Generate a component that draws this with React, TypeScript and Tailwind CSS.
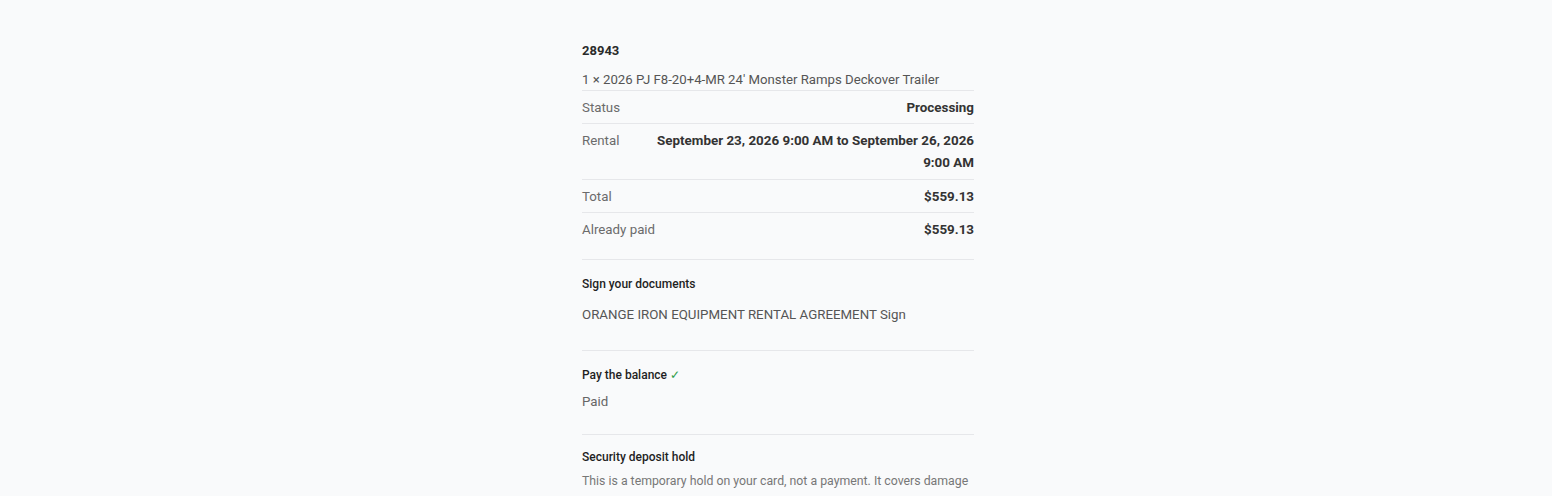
import React from "react";

const rows: { label: string; value: React.ReactNode; tall?: boolean }[] = [
  { label: "Status", value: "Processing" },
  {
    label: "Rental",
    tall: true,
    value: (
      <>
        September 23, 2026 9:00 AM to September 26, 2026
        <br />
        9:00 AM
      </>
    ),
  },
  { label: "Total", value: "$559.13" },
  { label: "Already paid", value: "$559.13" },
];

export default function App() {
  return (
    <div
      className="min-h-[496px] bg-[#f9fafb] text-[#333]"
      style={{ fontFamily: "Roboto, 'Liberation Sans', sans-serif" }}
    >
      <div className="mx-auto w-[396px] pt-[40px] pl-[4px]">
        {/* Order header */}
        <div className="text-[13px] leading-[22px] font-bold text-[#2a2a2a]">28943</div>
        <div className="mt-[7px] text-[13.2px] leading-[21px] text-[#555]">
          1 × 2026 PJ F8-20+4-MR 24′ Monster Ramps Deckover Trailer
        </div>

        {/* Summary */}
        <div>
          {rows.map((r) => (
            <div
              key={r.label}
              className={`flex justify-between gap-6 border-t border-[#e6e7ea] pt-[6px] text-[13.3px] leading-[22px] ${
                r.tall ? "pb-[5px]" : "pb-[4px]"
              }`}
            >
              <span className="shrink-0 text-[#6b6b6b]">{r.label}</span>
              <span className="text-right text-[13.4px] font-bold text-[#333]">{r.value}</span>
            </div>
          ))}
        </div>

        {/* Sign documents */}
        <div className="mt-[14px] border-t border-[#e6e7ea] pt-[14px] pb-[24px]">
          <div className="text-[12px] leading-[20px] font-medium text-[#1f1f1f]">Sign your documents</div>
          <div className="mt-[10px] text-[13.3px] leading-[22px] text-[#555]">
            ORANGE IRON EQUIPMENT RENTAL AGREEMENT Sign
          </div>
        </div>

        {/* Balance */}
        <div className="border-t border-[#e6e7ea] pt-[14px] pb-[21px]">
          <div className="text-[12px] leading-[20px] font-medium text-[#1f1f1f]">
            Pay the balance <span className="text-[#2e9e4a]">✓</span>
          </div>
          <div className="mt-[6px] text-[13.3px] leading-[22px] text-[#666]">Paid</div>
        </div>

        {/* Deposit */}
        <div className="border-t border-[#e6e7ea] pt-[12px]">
          <div className="text-[12px] leading-[20px] font-medium text-[#1f1f1f]">Security deposit hold</div>
          <div className="mt-[3px] whitespace-nowrap text-[12.3px] leading-[22px] text-[#777]">
            This is a temporary hold on your card, not a payment. It covers damage
          </div>
        </div>
      </div>
    </div>
  );
}
